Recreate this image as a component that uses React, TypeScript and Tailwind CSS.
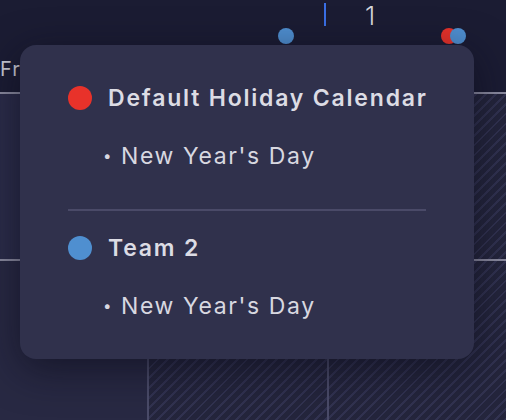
import React from 'react'

const hatch =
  'bg-[repeating-linear-gradient(135deg,#24253c_0px,#24253c_5px,#313250_5px,#313250_7px)]'

type Group = { name: string; color: string; events: string[] }

const groups: Group[] = [
  { name: 'Default Holiday Calendar', color: 'bg-[#e8322a]', events: ["New Year's Day"] },
  { name: 'Team 2', color: 'bg-[#4f8fd0]', events: ["New Year's Day"] },
]

export default function App() {
  return (
    <div
      className="relative h-[420px] w-[506px] overflow-hidden bg-[#2b2c49] text-[#d8d8e0]"
      style={{ fontFamily: 'Inter, "Noto Sans", sans-serif' }}
    >
      {/* header strip */}
      <div className="grid h-[92px] grid-cols-[147px_180px_179px] bg-[#1b1c33]">
        <div className="flex items-start pt-[54px] text-[20px] tracking-[1px] text-[#c9c9d3]">Fr</div>
        <div className="flex items-start justify-end pt-[3px]">
          <span className="mr-[30px] mt-[25px] h-4 w-4 rounded-full bg-[#4f8fd0]" />
          <span className="h-[23px] w-[2px] bg-[#3a6fe6]" />
          <span className="w-px" />
        </div>
        <div className="flex items-start pt-[1px]">
          <span className="ml-[38px] text-[26px] font-light leading-[30px] text-[#d4d4dc]">1</span>
          <div className="ml-[66px] mt-[27px] flex">
            <span className="h-4 w-4 rounded-full bg-[#e8322a]" />
            <span className="-ml-[7px] h-4 w-4 rounded-full bg-[#4f8fd0]" />
          </div>
        </div>
      </div>

      {/* grid body */}
      <div className="grid grid-cols-[147px_180px_179px] border-t-2 border-[#8b8ba0]">
        <div className="h-[165px]" />
        <div className={`h-[165px] border-l-2 border-[#6a6a86] ${hatch}`} />
        <div className={`h-[165px] border-l-2 border-[#6a6a86] ${hatch}`} />
      </div>
      <div className="grid grid-cols-[147px_180px_179px] border-t-2 border-[#8b8ba0]">
        <div className="h-[200px] bg-[#282943]" />
        <div className={`h-[200px] border-l-2 border-[#4a4b68] ${hatch}`} />
        <div className={`h-[200px] border-l-2 border-[#4a4b68] ${hatch}`} />
      </div>

      {/* popover */}
      <div className="absolute left-[20px] top-[45px] w-[454px] rounded-[16px] bg-[#30314c] px-[48px] pb-[33px] pt-[33px] shadow-[0_10px_40px_rgba(10,10,25,0.6)]">
        {groups.map((g, i) => (
          <div key={g.name}>
            {i > 0 && <div className="mb-[17px] mt-[33px] h-[2px] bg-[#4a4a68]" />}
            <div className="flex h-[40px] items-center gap-[16px]">
              <span className={`h-6 w-6 shrink-0 rounded-full ${g.color}`} />
              <span className="whitespace-nowrap text-[23px] font-semibold tracking-[1.8px] text-[#dcdce4]">
                {g.name}
              </span>
            </div>
            {g.events.map((e) => (
              <div key={e} className="mt-[18px] flex h-[40px] items-center pl-[35px] text-[23px] tracking-[1.6px]">
                <span className="mr-[8px] text-[15px]">•</span>
                <span>{e}</span>
              </div>
            ))}
          </div>
        ))}
      </div>
    </div>
  )
}
